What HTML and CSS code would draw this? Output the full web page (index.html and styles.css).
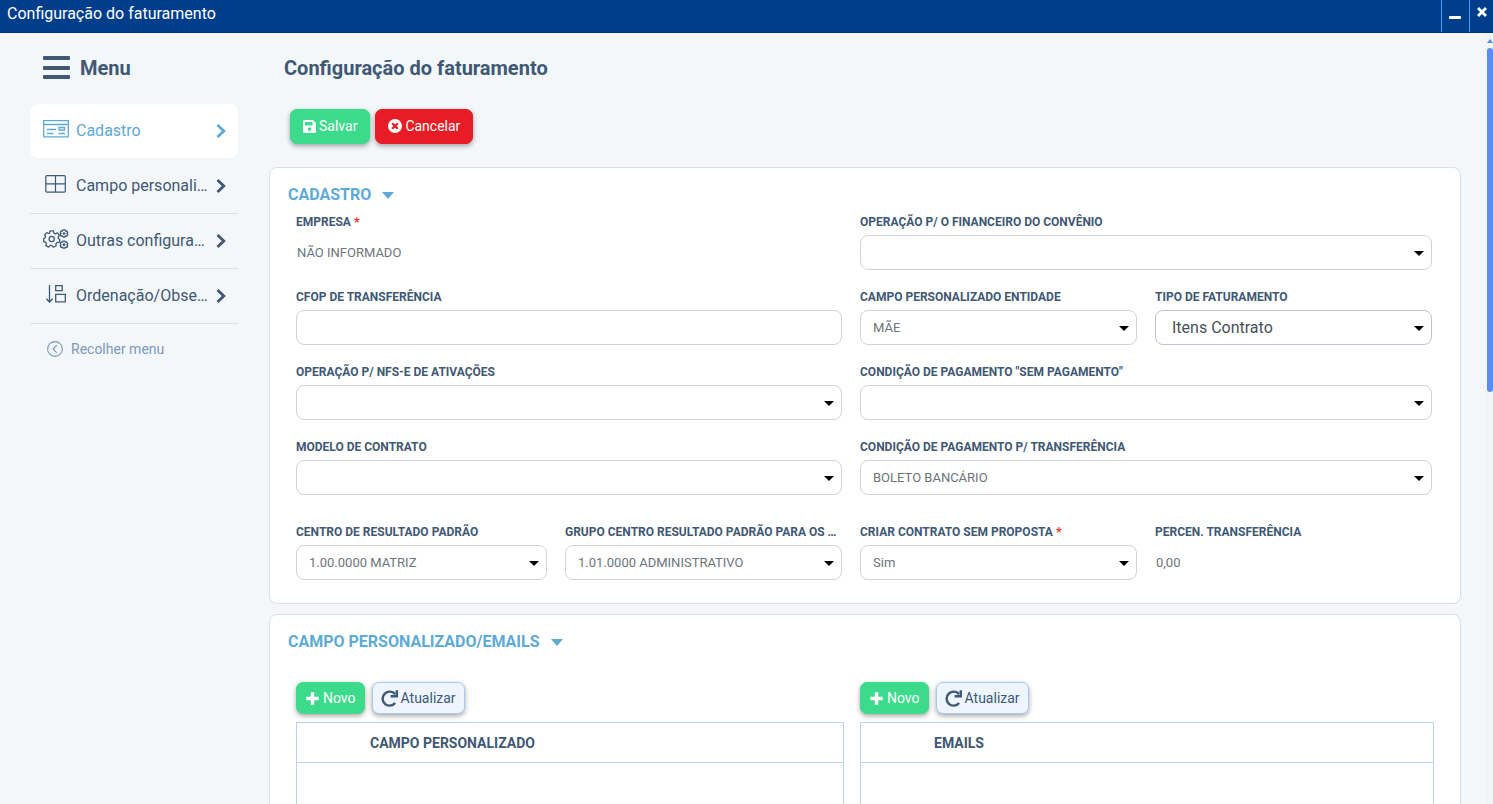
FILE: index.html
```html
<!DOCTYPE html>
<html lang="pt-BR">
<head>
<meta charset="utf-8">
<title>Configuração do faturamento</title>
<link rel="stylesheet" href="styles.css">
</head>
<body>
<svg class="defs" aria-hidden="true">
  <symbol id="chevron" viewBox="0 0 10 14"><path d="M1.500 1 7.800 7 1.500 13" fill="none" stroke="currentColor" stroke-width="2.800"/></symbol>
  <symbol id="plus" viewBox="0 0 14 14"><path d="M7 1.200v11.600M1.200 7h11.600" fill="none" stroke="currentColor" stroke-width="3.200"/></symbol>
  <symbol id="refresh" viewBox="0 0 16 16"><path d="M13.300 12.200A6.600 6.600 0 1 1 13.200 3.900" fill="none" stroke="currentColor" stroke-width="2.300"/><path d="M16 .2v6.900H9V4.800l4.700-.2V.2z" fill="currentColor"/></symbol>
</svg>

<header class="titlebar">
  <span class="titlebar-text">Configuração do faturamento</span>
  <button class="win-btn" type="button" aria-label="Minimizar"><svg width="12" height="12" viewBox="0 0 12 12"><rect y="9" width="12" height="3" rx="1" fill="#fff"/></svg></button>
  <button class="win-btn win-close" type="button" aria-label="Fechar"><svg width="10" height="10" viewBox="0 0 10 10"><path d="M1 1l8 8M9 1l-8 8" stroke="#fff" stroke-width="2.800"/></svg></button>
</header>

<div class="app">
  <nav class="sidebar" aria-label="Menu">
    <div class="menu-head">
      <svg width="28" height="24" viewBox="0 0 28 24" fill="currentColor"><rect x="0" y="0" width="27" height="4" rx="1"/><rect x="0" y="10" width="27" height="4" rx="1"/><rect x="0" y="19" width="27" height="4" rx="1"/></svg>
      <span>Menu</span>
    </div>
    <a class="menu-item active" href="#cadastro">
      <svg class="menu-icon" viewBox="0 0 26 20" fill="none" stroke="currentColor" stroke-width="1.300"><path d="M.7 1.700h24.600v16.100H.7zM.7 5.500h24.600M4 10.500h9M4 14.500h6.500M15.500 14.500H22M16 8.500h5.500v2.500H16z"/></svg>
      <span class="menu-label">Cadastro</span>
      <svg class="chevron"><use href="#chevron"/></svg>
    </a>
    <a class="menu-item" href="#campo">
      <svg class="menu-icon" viewBox="0 0 26 20" fill="none" stroke="currentColor" stroke-width="1.200"><rect x="2.800" y="1.600" width="19.500" height="16.500" rx="1"/><path d="M12.500 1.600v16.500M2.800 9.900h19.500"/></svg>
      <span class="menu-label">Campo personalizado</span>
      <svg class="chevron"><use href="#chevron"/></svg>
    </a>
    <a class="menu-item" href="#outras">
      <svg class="menu-icon" viewBox="0 0 26 20" fill="none" stroke="currentColor" stroke-width="1.300" stroke-linejoin="round"><path d="M7 1.800h3.400l.5 2.300 1.500.7 2-1 2 2.500-1.300 1.900.3 1.300 1.500 1-.7 2.900-2.300.2-1 1.200.2 2.200-2.900 1.200-1.500-1.800H7.300l-1.600 1.700-2.800-1.500.4-2.200-.9-1.200-1.700-.5v-3.200l1.500-.9.300-1.200L1.600 5.700l2.200-2.100 1.900.9 1-.5z"/><circle cx="8.700" cy="10" r="2.600"/><path d="M20 .9h2l.4 1.100 1.400-.2.900 1.700-.8 1 .8 1-.9 1.700-1.400-.2-.4 1h-2l-.5-1-1.400.2-.9-1.700.8-1-.8-1 .9-1.700 1.400.2zM20 12.100h2l.4 1.100 1.400-.2.900 1.700-.8 1 .8 1-.9 1.700-1.400-.2-.4 1h-2l-.5-1-1.400.2-.9-1.700.8-1-.8-1 .9-1.700 1.400.2z"/><circle cx="21" cy="4.500" r=".7"/><circle cx="21" cy="15.700" r=".7"/></svg>
      <span class="menu-label">Outras configurações</span>
      <svg class="chevron"><use href="#chevron"/></svg>
    </a>
    <a class="menu-item" href="#ordenacao">
      <svg class="menu-icon" viewBox="0 0 26 20" fill="none" stroke="currentColor" stroke-width="1.300"><path d="M6.500 1v17M3.300 14.800l3.200 3.200 3.200-3.200M12.700 1.700h6.500v5h-6.500zM12.700 10.300h9.600v7.500h-9.600z"/></svg>
      <span class="menu-label">Ordenação/Observação</span>
      <svg class="chevron"><use href="#chevron"/></svg>
    </a>
    <button class="collapse" type="button">
      <svg width="16" height="16" viewBox="0 0 16 16" fill="none" stroke="currentColor" stroke-width="1.100"><circle cx="8" cy="8" r="7.400"/><path d="M9.800 4.200 6 8l3.800 3.800"/></svg>
      Recolher menu
    </button>
  </nav>

  <main class="content">
    <h1 class="page-title">Configuração do faturamento</h1>
    <div class="actions">
      <button class="btn btn-lg btn-green" type="button"><svg width="13" height="13" viewBox="0 0 13 13"><path fill="currentColor" fill-rule="evenodd" d="M1.500 0H10l3 3v8.500a1.500 1.500 0 0 1-1.500 1.500h-10A1.500 1.500 0 0 1 0 11.500v-10A1.500 1.500 0 0 1 1.500 0zM2 2v3.400H9.500V2zM6.500 7.300a1.800 1.800 0 1 0 .01 0z"/></svg>Salvar</button>
      <button class="btn btn-lg btn-red" type="button"><svg width="14" height="14" viewBox="0 0 14 14"><circle cx="7" cy="7" r="7" fill="#fff"/><path d="M4.200 4.200l5.600 5.600M9.800 4.200l-5.600 5.600" stroke="#e81c24" stroke-width="2.200"/></svg>Cancelar</button>
    </div>

    <section class="card" id="cadastro">
      <h2 class="card-title">CADASTRO <i class="tri"></i></h2>
      <div class="form">
        <div class="field"><label for="empresa">EMPRESA <b class="req">*</b></label><input class="plain" id="empresa" value="NÃO INFORMADO"></div>
        <div class="field"><label for="opfin">OPERAÇÃO P/ O FINANCEIRO DO CONVÊNIO</label><div class="select"><select id="opfin"><option></option></select></div></div>
        <div class="field"><label for="cfop">CFOP DE TRANSFERÊNCIA</label><input class="box" id="cfop"></div>
        <div class="pair pair-right">
          <div class="field"><label for="cpe">CAMPO PERSONALIZADO ENTIDADE</label><div class="select"><select id="cpe"><option>MÃE</option></select></div></div>
          <div class="field"><label for="tipo">TIPO DE FATURAMENTO</label><div class="select"><select class="large" id="tipo"><option>Itens Contrato</option></select></div></div>
        </div>
        <div class="field"><label for="nfse">OPERAÇÃO P/ NFS-E DE ATIVAÇÕES</label><div class="select"><select id="nfse"><option></option></select></div></div>
        <div class="field"><label for="cond">CONDIÇÃO DE PAGAMENTO "SEM PAGAMENTO"</label><div class="select"><select id="cond"><option></option></select></div></div>
        <div class="field"><label for="modelo">MODELO DE CONTRATO</label><div class="select"><select id="modelo"><option></option></select></div></div>
        <div class="field"><label for="condt">CONDIÇÃO DE PAGAMENTO P/ TRANSFERÊNCIA</label><div class="select"><select id="condt"><option>BOLETO BANCÁRIO</option></select></div></div>
        <div class="pair pair-left spaced">
          <div class="field"><label for="centro">CENTRO DE RESULTADO PADRÃO</label><div class="select"><select id="centro"><option>1.00.0000 MATRIZ</option></select></div></div>
          <div class="field"><label for="grupo">GRUPO CENTRO RESULTADO PADRÃO PARA OS CONTRATOS</label><div class="select"><select id="grupo"><option>1.01.0000 ADMINISTRATIVO</option></select></div></div>
        </div>
        <div class="pair pair-right spaced">
          <div class="field"><label for="criar">CRIAR CONTRATO SEM PROPOSTA <b class="req">*</b></label><div class="select"><select id="criar"><option>Sim</option></select></div></div>
          <div class="field"><label for="percen">PERCEN. TRANSFERÊNCIA</label><input class="plain" id="percen" value="0,00"></div>
        </div>
      </div>
    </section>

    <section class="card card-last" id="campo">
      <h2 class="card-title">CAMPO PERSONALIZADO/EMAILS <i class="tri"></i></h2>
      <div class="lists">
        <div class="list">
          <div class="toolbar">
            <button class="btn btn-green" type="button"><svg width="15" height="15"><use href="#plus"/></svg>Novo</button>
            <button class="btn btn-light" type="button"><svg width="17" height="17"><use href="#refresh"/></svg>Atualizar</button>
          </div>
          <table class="grid"><thead><tr><th>CAMPO PERSONALIZADO</th></tr></thead><tbody><tr><td></td></tr></tbody></table>
        </div>
        <div class="list">
          <div class="toolbar">
            <button class="btn btn-green" type="button"><svg width="15" height="15"><use href="#plus"/></svg>Novo</button>
            <button class="btn btn-light" type="button"><svg width="17" height="17"><use href="#refresh"/></svg>Atualizar</button>
          </div>
          <table class="grid"><thead><tr><th>EMAILS</th></tr></thead><tbody><tr><td></td></tr></tbody></table>
        </div>
      </div>
    </section>
  </main>

  <div class="scrollbar" aria-hidden="true"><i class="scroll-up"></i><i class="scroll-thumb"></i></div>
</div>
</body>
</html>
```

FILE: styles.css
```css
* { box-sizing: border-box; }

body {
  margin: 0;
  height: 100vh;
  display: flex;
  flex-direction: column;
  overflow: hidden;
  background: #f3f7fa;
  color: #3f5874;
  font-family: Roboto, "Liberation Sans", sans-serif;
  font-size: 16px;
}

button, input, select { font: inherit; color: inherit; margin: 0; }
button { cursor: pointer; }
.defs { display: none; }

/* Window title bar */
.titlebar {
  flex: none;
  display: flex;
  height: 33px;
  padding-left: 7px;
  background: #003e8c;
  border-bottom: 1px solid #00337a;
  color: #fff;
}
.titlebar-text { flex: 1; line-height: 27px; }
.win-btn {
  display: flex;
  justify-content: center;
  align-items: flex-start;
  width: 28px;
  padding: 7px 1px 0 0;
  border: 0;
  border-left: 1px solid #4a9af5;
  background: none;
}
.win-close { width: 24px; padding-right: 0; }

.app { flex: 1; min-height: 0; display: flex; }

/* Side menu */
.sidebar { flex: none; width: 269px; padding: 20px 31px 0 30px; }
.menu-head {
  display: flex;
  align-items: center;
  gap: 9px;
  height: 30px;
  margin-bottom: 21px;
  padding-left: 13px;
  font-size: 20px;
  font-weight: 700;
}
.menu-item {
  display: flex;
  align-items: center;
  height: 55px;
  padding: 0 12px 0 13px;
  border-bottom: 1px solid #d9dfe4;
  color: inherit;
  text-decoration: none;
}
.menu-item.active {
  height: 54px;
  margin-bottom: 1px;
  border: 0;
  border-radius: 8px;
  background: #fff;
  color: #5eaad6;
}
.menu-icon { flex: none; width: 26px; height: 20px; margin: 0 7px 4px 0; }
.menu-label { flex: 1; overflow: hidden; white-space: nowrap; text-overflow: ellipsis; line-height: 24px; }
.chevron { flex: none; width: 10px; height: 14px; margin-left: 8px; }
.collapse {
  display: flex;
  align-items: center;
  gap: 8px;
  margin-top: 16px;
  padding: 0 0 0 17px;
  border: 0;
  background: none;
  color: #7d98b8;
  font-size: 14px;
  line-height: 18px;
}

/* Content */
.content { flex: 1; min-width: 0; display: flex; flex-direction: column; padding-right: 24px; overflow: hidden; }
.page-title { margin: 20px 0 26px 15px; font-size: 20px; line-height: 30px; font-weight: 700; }
.actions { display: flex; gap: 5px; margin: 0 0 23px 21px; }

.btn {
  display: inline-flex;
  align-items: center;
  gap: 3px;
  height: 32px;
  padding: 0 8px;
  border: 1px solid transparent;
  border-radius: 7px;
  font-size: 14px;
  box-shadow: 0 2px 5px rgba(0, 0, 0, .35);
}
.btn-lg { height: 35px; padding: 0 12px 1px; }
.btn-green { background: #3cdb8b; border-color: #3cdb8b; color: #fff; }
.btn-red { background: #e81c24; border-color: #e81c24; color: #fff; }
.btn-light { background: #eef5fe; border-color: #a9c9f0; }

.card {
  flex: none;
  margin-bottom: 10px;
  padding: 15px 18px 23px;
  border: 1px solid #d9dfe6;
  border-radius: 8px;
  background: #fff;
}
.card-last { flex: 1 0 auto; }
.card-title {
  display: flex;
  align-items: center;
  gap: 11px;
  margin: 0;
  color: #5eaad6;
  font-size: 16px;
  line-height: 24px;
  font-weight: 700;
}
.tri {
  border: 6px solid transparent;
  border-top: 7px solid #5eaad6;
  border-bottom: 0;
}

.form {
  display: grid;
  grid-template-columns: 546fr 572fr;
  gap: 18px;
  padding: 7px 10px 0 8px;
}
.pair { display: grid; gap: 18px; }
.pair-left { grid-template-columns: 251fr 277fr; }
.pair-right { grid-template-columns: 1fr 1fr; }
.spaced { margin-top: 10px; }
.field { min-width: 0; display: flex; flex-direction: column; gap: 5px; }
.form { row-gap: 19px; }
.field label {
  overflow: hidden;
  white-space: nowrap;
  text-overflow: ellipsis;
  padding-right: 4px;
  font-size: 12px;
  line-height: 16px;
  font-weight: 700;
}
.req { color: #e8392e; }

.box, .plain, .select select {
  width: 100%;
  height: 35px;
  border: 1px solid #ced4da;
  border-radius: 8px;
  background: #fff;
  color: #6c757d;
  font-size: 13px;
  padding: 0 12px;
}
.plain { border-color: transparent; padding: 0; }
.select { position: relative; }
.select select { display: block; appearance: none; }
.select select.large { padding: 0 16px; font-size: 16px; color: #495057; border-color: #bcc5cf; }
.select::after {
  content: "";
  position: absolute;
  top: 16px;
  right: 8px;
  border: 5px solid transparent;
  border-top-color: #000;
  border-bottom: 0;
  pointer-events: none;
}

/* Lists */
.lists {
  display: grid;
  grid-template-columns: 548fr 574fr;
  gap: 16px;
  padding: 28px 8px 0;
}
.toolbar { display: flex; gap: 7px; margin-bottom: 8px; }
.grid { width: 100%; border-collapse: collapse; }
.grid th, .grid td { border: 1px solid #b8d4f2; }
.grid th {
  height: 40px;
  padding: 0 0 0 73px;
  text-align: left;
  font-size: 14px;
  font-weight: 700;
}
.grid td { height: 120px; }

/* Scroll bar */
.scrollbar { flex: none; width: 8px; padding: 6px 0 0 2px; background: #f1f4f4; }
.scroll-up, .scroll-thumb { display: block; }
.scroll-up {
  width: 6px;
  border: 3px solid transparent;
  border-top: 0;
  border-bottom: 4px solid #5b8def;
  margin-bottom: 5px;
}
.scroll-thumb { height: 45%; border-radius: 3px; background: #5b8def; }
```
